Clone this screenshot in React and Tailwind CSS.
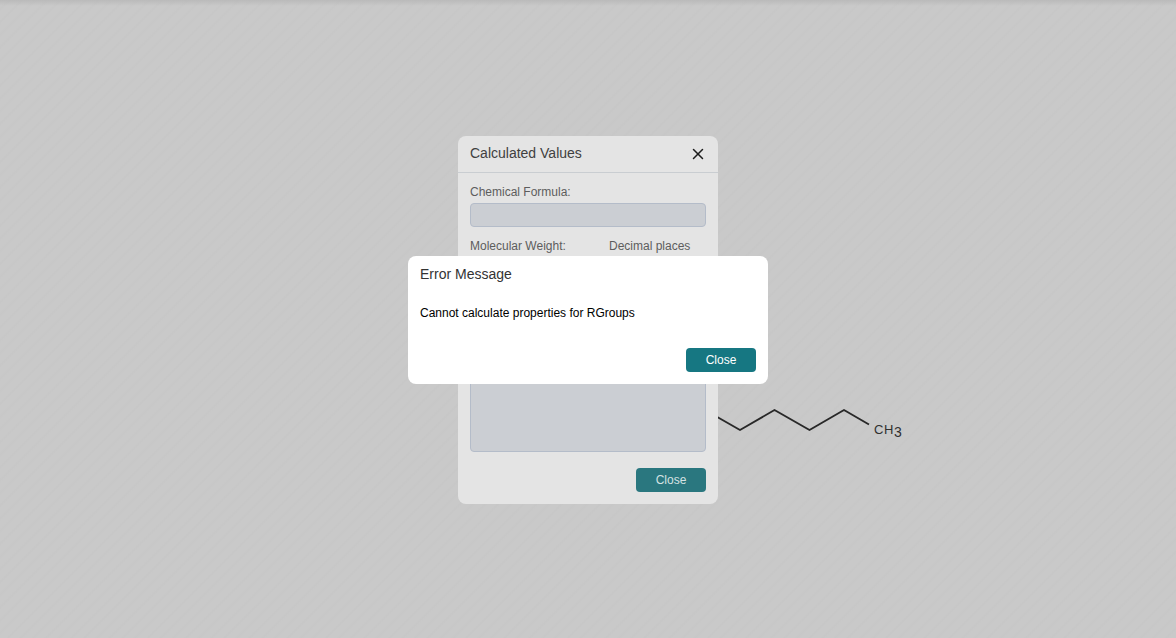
import { X } from "lucide-react";

function Molecule() {
  return (
    <svg
      className="absolute left-1/2 top-[400px] ml-[100px]"
      width="230"
      height="48"
      viewBox="688 400 230 48"
      role="img"
      aria-label="Alkyl chain"
    >
      <path
        d="M705 410L740 430L774.500 410L809.500 430L844 410L869 424.500"
        fill="none"
        stroke="#282828"
        strokeWidth="1.900"
        strokeLinejoin="round"
      />
      <g fill="#303030" fontFamily="Liberation Sans, Arial, sans-serif" fontSize="13">
        <text x="874" y="434">C</text>
        <text x="884" y="434">H</text>
        <text x="894" y="437" fontSize="14">3</text>
      </g>
    </svg>
  );
}

function ReadOnlyField({ label, id }) {
  return (
    <div className="flex flex-col gap-0.5">
      <label htmlFor={id} className="leading-[18px]">{label}</label>
      <input id={id} readOnly className="h-6 w-full rounded border border-[#b4bcc9] bg-[#cbced3] px-2" />
    </div>
  );
}

function CalculatedValues() {
  return (
    <section
      role="dialog"
      aria-labelledby="values-title"
      className="w-[260px] rounded-lg bg-[#e4e4e4] text-xs text-[#5d5d5d]"
    >
      <header className="flex items-center justify-between border-b border-[#c9cdd1] px-3 py-2">
        <h2 id="values-title" className="pb-0.5 text-sm leading-[18px] text-[#404040]">Calculated Values</h2>
        <button aria-label="Close calculated values" className="flex size-4 items-center justify-center text-[#1c1c1c]">
          <X className="size-[18px] shrink-0" strokeWidth={2} />
        </button>
      </header>
      <div className="flex flex-col gap-2.5 px-3 pt-2.5">
        <ReadOnlyField id="formula" label="Chemical Formula:" />
        <div className="grid grid-cols-[127px_1fr] gap-x-3">
          <ReadOnlyField id="weight" label="Molecular Weight:" />
          <div className="flex flex-col gap-0.5">
            <label htmlFor="decimals" className="leading-[18px]">Decimal places</label>
            <select id="decimals" className="h-6 rounded border border-[#b4bcc9]" defaultValue="3">
              <option>3</option>
            </select>
          </div>
        </div>
        <input aria-label="Exact mass" readOnly className="mt-5 h-6 rounded border border-[#b4bcc9] bg-[#cbced3]" />
        <textarea
          aria-label="Elemental analysis"
          readOnly
          className="mt-5 h-[87px] resize-none rounded border border-[#b4bcc9] bg-[#cbced3]"
        />
      </div>
      <footer className="flex justify-end px-3 pb-3 pt-4">
        <button className="h-6 w-[70px] rounded bg-[#2a777f] text-[#d6e2e3]">Close</button>
      </footer>
    </section>
  );
}

function ErrorMessage() {
  return (
    <section
      role="alertdialog"
      aria-labelledby="error-title"
      className="w-[360px] rounded-lg bg-white text-xs text-black"
    >
      <h2 id="error-title" className="px-3 py-2 text-sm leading-5 text-[#333333]">Error Message</h2>
      <p className="px-3 pb-[26px] pt-3 leading-[18px]">Cannot calculate properties for RGroups</p>
      <footer className="flex justify-end px-3 pb-3">
        <button className="h-6 w-[70px] rounded bg-[#167782] text-white">Close</button>
      </footer>
    </section>
  );
}

export default function App() {
  return (
    <main className="relative min-h-screen overflow-hidden bg-[#c8c8c8] bg-[repeating-linear-gradient(-45deg,#c9c9c9_0px,#c9c9c9_5px,#c7c7c7_7px,#c9c9c9_9px)] font-['Liberation_Sans',Arial,sans-serif]">
      <div className="h-1.5 bg-linear-to-b from-[#bababa] to-transparent" />
      <Molecule />
      <div className="fixed inset-0 flex items-center justify-center pt-0.5">
        <CalculatedValues />
      </div>
      <div className="fixed inset-0 flex items-center justify-center pt-0.5">
        <ErrorMessage />
      </div>
    </main>
  );
}
